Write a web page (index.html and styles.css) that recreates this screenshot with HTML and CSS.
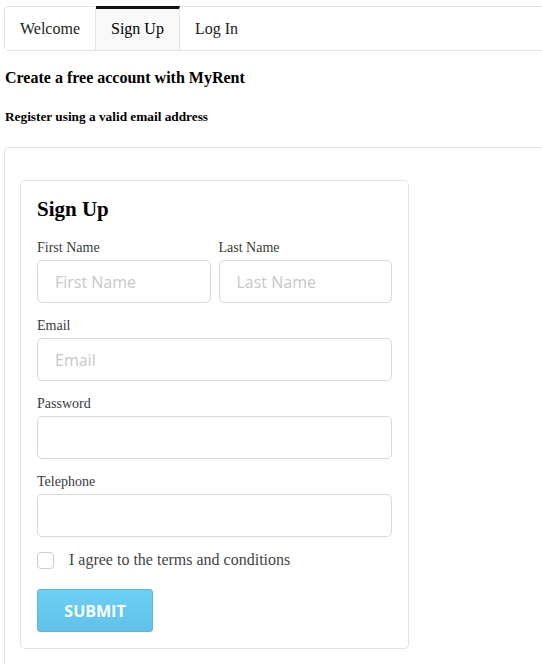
FILE: index.html
```html
<!DOCTYPE html>
<html>
<head>
<meta charset="utf-8">
<link rel="stylesheet" href="styles.css">
</head>
<body>
<nav class="tabs">
  <a class="tab">Welcome</a>
  <a class="tab active">Sign Up</a>
  <a class="tab">Log In</a>
</nav>
<h1 class="title">Create a free account with MyRent</h1>
<h2 class="subtitle">Register using a valid email address</h2>
<div class="segment">
  <form class="card">
    <h3 class="card-title">Sign Up</h3>
    <div class="row">
      <div class="field">
        <label class="label">First Name</label>
        <input class="input" type="text" placeholder="First Name">
      </div>
      <div class="field">
        <label class="label">Last Name</label>
        <input class="input" type="text" placeholder="Last Name">
      </div>
    </div>
    <div class="field">
      <label class="label">Email</label>
      <input class="input" type="text" placeholder="Email">
    </div>
    <div class="field">
      <label class="label">Password</label>
      <input class="input" type="password">
    </div>
    <div class="field">
      <label class="label">Telephone</label>
      <input class="input" type="text">
    </div>
    <div class="check">
      <span class="box"></span>
      <span class="check-label">I agree to the terms and conditions</span>
    </div>
    <button class="submit" type="button">SUBMIT</button>
  </form>
</div>
</body>
</html>
```
FILE: styles.css
```css
html, body {
  margin: 0;
  padding: 0;
  background: #fff;
  overflow: hidden;
}
body {
  font-family: "Liberation Serif", "Times New Roman", serif;
  color: #000;
}
.tabs {
  display: flex;
  margin: 6px -10px 0 4px;
  height: 45px;
  box-sizing: border-box;
  border: 1px solid #e3e3e3;
  border-radius: 4px;
}
.tab {
  display: flex;
  align-items: center;
  padding: 0 15px;
  font-size: 16px;
  color: #222;
  border-right: 1px solid #e6e6e6;
}
.tab:last-child { border-right: none; }
.tab:first-child { padding-left: 15px; width: 60px; }
.tab.active {
  background: #f9f9f9;
  color: #000;
  border-top: 3px solid #111;
  margin-top: -1px;
  padding-bottom: 1px;
  width: 53px;
}
.title {
  margin: 17px 0 0 5px;
  font-size: 16px;
  line-height: 20px;
  font-weight: bold;
}
.subtitle {
  margin: 21px 0 0 5px;
  font-size: 13.3px;
  line-height: 16px;
  font-weight: bold;
}
.segment {
  margin: 22px -10px 0 4px;
  border: 1px solid #e6e6e6;
  border-radius: 4px;
  padding: 32px 0 30px 15px;
}
.card {
  width: 389px;
  box-sizing: border-box;
  border: 1px solid #e3e3e3;
  border-radius: 5px;
  padding: 16px;
  display: flex;
  flex-direction: column;
}
.card-title {
  margin: 0 0 18px;
  font-size: 21px;
  line-height: 24px;
  font-weight: bold;
}
.row {
  display: grid;
  grid-template-columns: 1fr 1fr;
  gap: 8px;
}
.field {
  display: flex;
  flex-direction: column;
  margin-bottom: 14px;
}
.label {
  font-size: 14px;
  line-height: 16px;
  color: #3a3a3a;
  margin: 1px 0 4px;
}
.input {
  height: 43px;
  box-sizing: border-box;
  border: 1px solid #d9d9d9;
  border-radius: 5px;
  padding: 0 17px;
  font-family: "Open Sans", "DejaVu Sans", sans-serif;
  font-size: 16px;
  color: #333;
  background: #fff;
  width: 100%;
  margin: 0;
}
.input::placeholder { color: #c8c8c8; }
.check {
  display: flex;
  align-items: center;
  gap: 15px;
  height: 18px;
}
.box {
  width: 17px;
  height: 17px;
  box-sizing: border-box;
  border: 1px solid #cfcfcf;
  border-radius: 4px;
  background: #fff;
}
.check-label {
  font-size: 16px;
  color: #444;
}
.submit {
  align-self: flex-start;
  margin-top: 20px;
  width: 116px;
  height: 43px;
  border: 1px solid #5ab7dc;
  border-radius: 3px;
  background: linear-gradient(#6dcff4, #60c2ea);
  color: #fff;
  font-family: "Open Sans", "DejaVu Sans", sans-serif;
  font-weight: bold;
  font-size: 16px;
  padding: 0;
}
```
